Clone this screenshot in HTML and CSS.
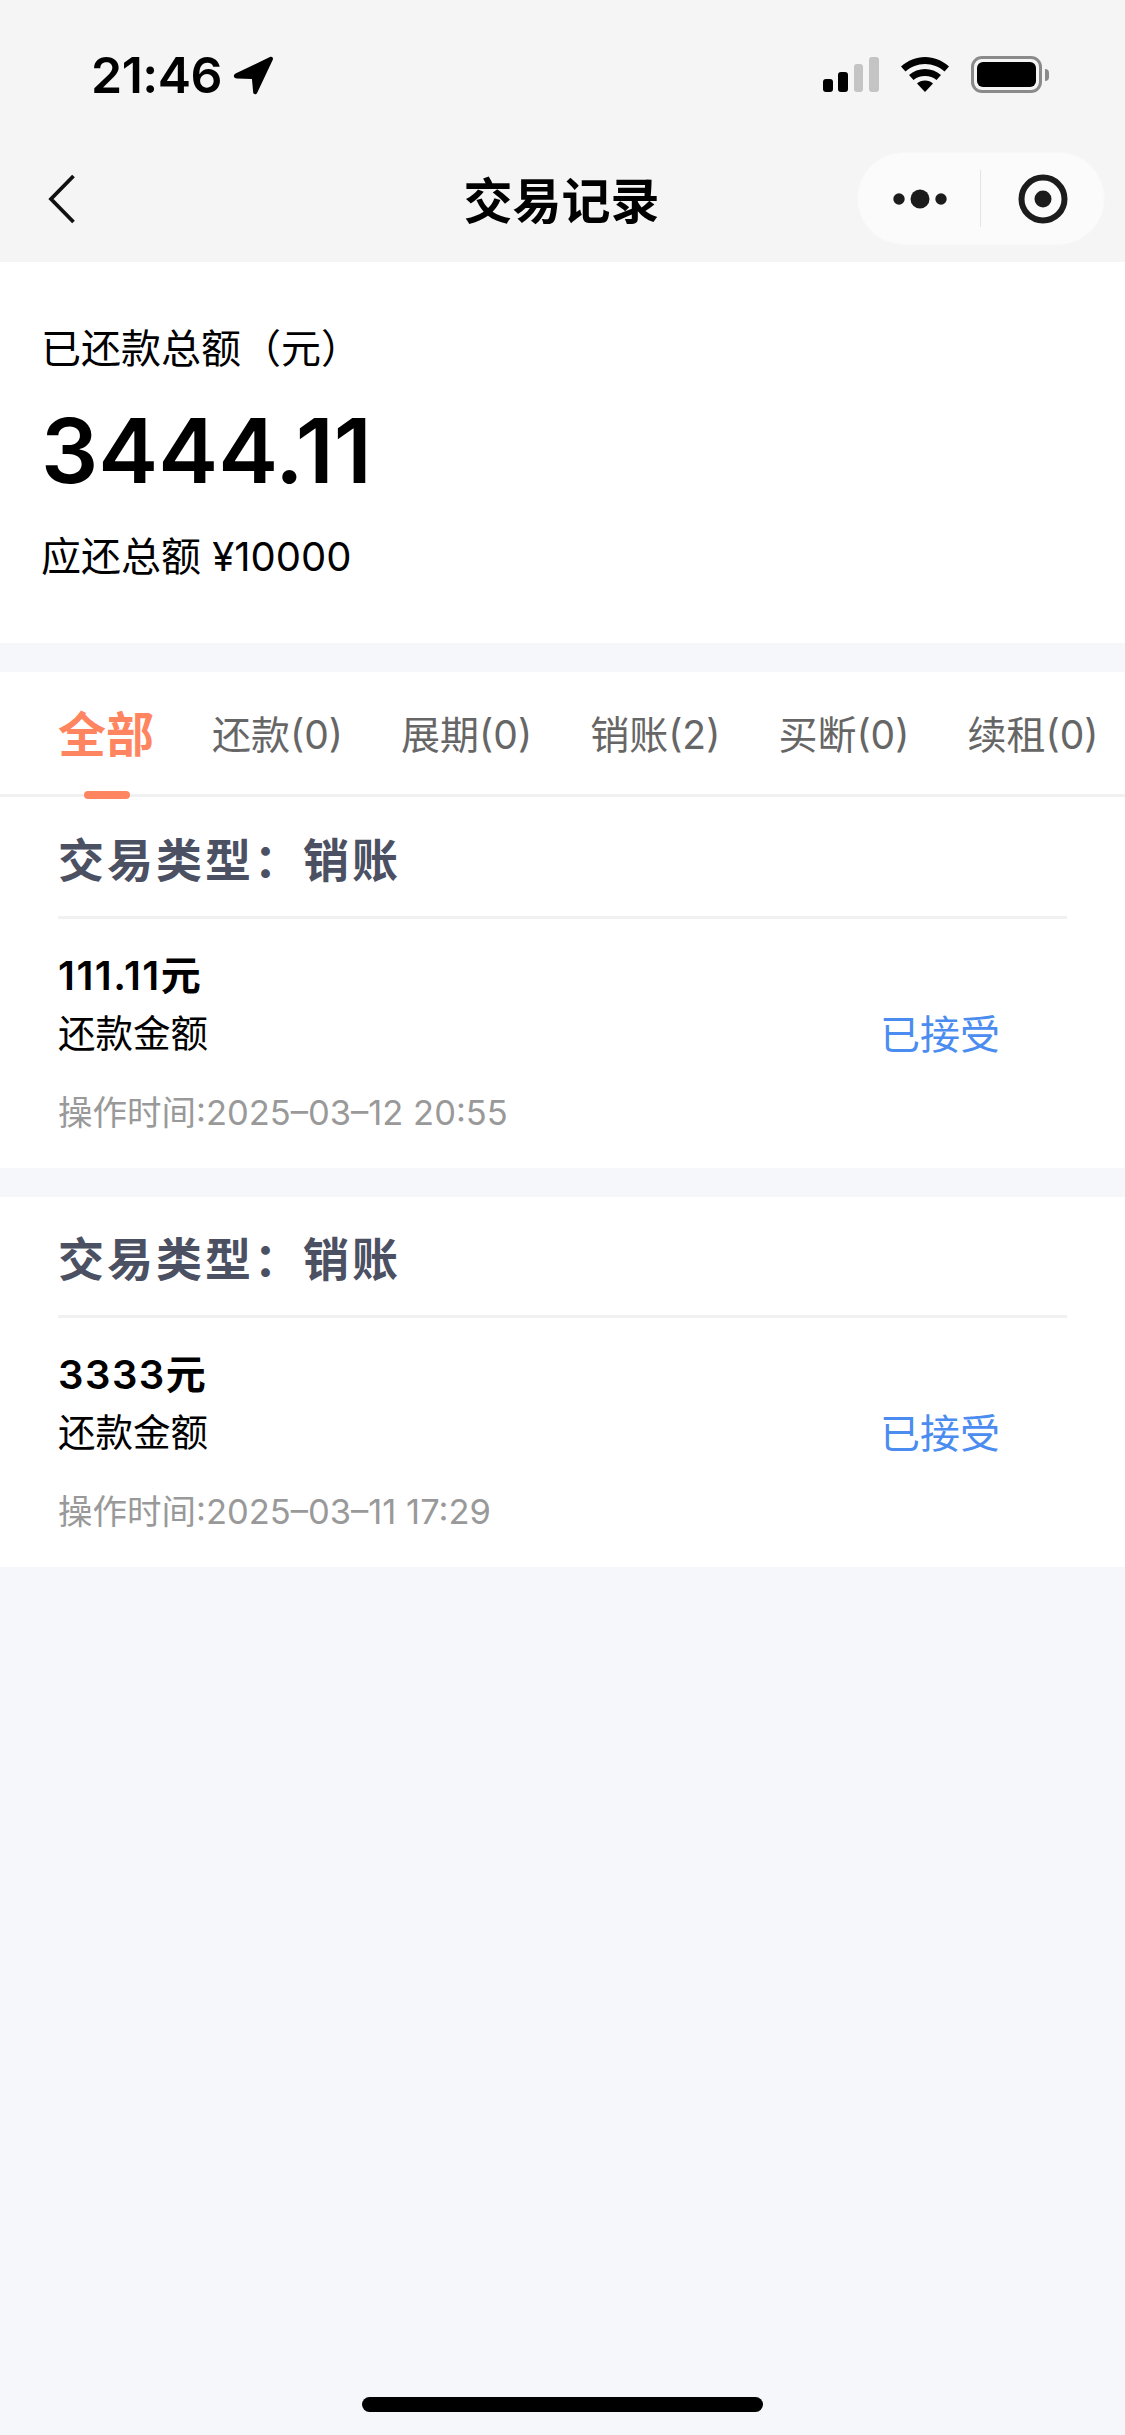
FILE: index.html
```html
<!DOCTYPE html>
<html lang="zh-CN">
<head>
<meta charset="utf-8">
<title>交易记录</title>
<link rel="stylesheet" href="styles.css">
</head>
<body>
<div class="page">
  <header class="top">
    <div class="status">
      <div class="status-left">
        <span class="clock">21:46</span>
        <svg class="loc" viewBox="0 0 40 38" width="41" height="39"><path d="M2.500 17 36 1c2-.9 3.600.7 2.800 2.700L23.500 36c-.8 1.800-3.600 1.500-3.800-.5L18.500 22.500 4 22c-3.500-.2-4.200-3.500-1.500-5z" fill="#000"/></svg>
      </div>
      <div class="status-right">
        <svg class="signal" viewBox="0 0 56 35" width="56" height="35">
          <rect x="0" y="22" width="10" height="13" rx="3" fill="#000"/>
          <rect x="15" y="15" width="10" height="20" rx="3" fill="#000"/>
          <rect x="31" y="7" width="9" height="28" rx="3" fill="#c4c4c4"/>
          <rect x="46" y="0" width="10" height="35" rx="3" fill="#c4c4c4"/>
        </svg>
        <svg class="wifi" viewBox="0 0 48 35" width="48" height="35">
          <path d="M24 0C15 0 7 3.500 0 9.500l4.500 5C10 9.800 16.500 7 24 7s14 2.800 19.500 7.500l4.500-5C41 3.500 33 0 24 0z" fill="#000"/>
          <path d="M24 12c-6 0-11.500 2.200-16 6l4.500 5c3-2.500 7-4 11.500-4s8.500 1.500 11.500 4l4.500-5c-4.500-3.800-10-6-16-6z" fill="#000"/>
          <path d="M24 23.500c-3.200 0-6 1.100-8 3L24 35l8-8.500c-2-1.900-4.800-3-8-3z" fill="#000"/>
        </svg>
        <div class="battery"><span class="battery-fill"></span></div>
        <span class="battery-nub"></span>
      </div>
    </div>
    <nav class="nav">
      <svg class="back" viewBox="0 0 28 50" width="28" height="50"><path d="M25.500 2 3 25l22.500 23" fill="none" stroke="#111" stroke-width="3.800"/></svg>
      <h1 class="nav-title">交易记录</h1>
      <div class="capsule">
        <svg class="dots" viewBox="0 0 54 20" width="54" height="20"><circle cx="6" cy="10" r="5.700" fill="#1c1c1c"/><circle cx="27" cy="10" r="9.500" fill="#1c1c1c"/><circle cx="48" cy="10" r="5.700" fill="#1c1c1c"/></svg>
        <span class="capsule-line"></span>
        <svg class="target" viewBox="0 0 50 50" width="50" height="50"><circle cx="25" cy="25" r="21.500" fill="none" stroke="#1c1c1c" stroke-width="6"/><circle cx="25" cy="25" r="8.500" fill="#1c1c1c"/></svg>
      </div>
    </nav>
  </header>

  <section class="summary">
    <p class="summary-label">已还款总额（元）</p>
    <p class="summary-amount">3444.11</p>
    <p class="summary-due">应还总额 ¥10000</p>
  </section>

  <section class="records">
    <div class="tabs">
      <span class="tab tab-active">全部</span>
      <span class="tab">还款(0)</span>
      <span class="tab">展期(0)</span>
      <span class="tab">销账(2)</span>
      <span class="tab">买断(0)</span>
      <span class="tab">续租(0)</span>
    </div>

    <article class="record record-first">
      <h2 class="record-type">交易类型：销账</h2>
      <div class="record-body">
        <div class="record-info">
          <p class="record-amount">111.11元</p>
          <p class="record-label">还款金额</p>
          <p class="record-time">操作时间:2025–03–12 20:55</p>
        </div>
        <span class="record-state">已接受</span>
      </div>
    </article>

    <article class="record">
      <h2 class="record-type">交易类型：销账</h2>
      <div class="record-body">
        <div class="record-info">
          <p class="record-amount">3333元</p>
          <p class="record-label">还款金额</p>
          <p class="record-time">操作时间:2025–03–11 17:29</p>
        </div>
        <span class="record-state">已接受</span>
      </div>
    </article>
  </section>

  <div class="home-bar"></div>
</div>
</body>
</html>
```
FILE: styles.css
```css
* { box-sizing: border-box; margin: 0; padding: 0; }
html, body { width: 1125px; height: 2435px; overflow: hidden; }
body {
  background: #f6f7fb;
  color: #000;
  font-family: Inter, "Noto Sans CJK SC", "Noto Sans", sans-serif;
}
.page { position: relative; width: 1125px; height: 2435px; }

.top { height: 262px; background: #f5f5f5; display: flex; flex-direction: column; }
.status { height: 153px; padding: 56px 76px 0 91px; display: flex; justify-content: space-between; align-items: flex-start; }
.status-left { display: flex; align-items: center; gap: 11px; height: 38px; }
.clock { font-size: 50px; font-weight: 600; line-height: 38px; letter-spacing: -0.5px; }
.status-right { display: flex; align-items: center; height: 37px; }
.signal { margin-right: 22px; }
.wifi { margin-right: 22px; }
.battery { width: 71px; height: 37px; border: 3px solid #8a8a8a; border-radius: 11px; padding: 3px; }
.battery-fill { display: block; width: 100%; height: 100%; background: #000; border-radius: 6px; }
.battery-nub { width: 4px; height: 12px; margin-left: 3px; background: #8a8a8a; border-radius: 0 4px 4px 0; }

.nav { height: 91px; padding: 0 20px 0 48px; display: flex; align-items: center; justify-content: space-between; position: relative; }
.nav-title { position: absolute; left: 0; right: 0; top: 0; bottom: 0; display: flex; align-items: center; justify-content: center; font-size: 49px; font-weight: 600; padding: 0 2px 3px 0; }
.capsule { position: relative; flex: none; width: 248px; height: 93px; border-radius: 47px; background: #fbfbfb; border: 1px solid #f8f8f8; display: flex; align-items: center; padding-left: 35px; }
.dots { flex: none; }
.capsule-line { width: 1px; height: 57px; background: #e4e4e4; margin-left: 33px; margin-right: 36px; }
.target { margin-left: 1px; }

.summary { height: 381px; background: #fff; padding: 62px 41px 0; }
.summary-label { font-size: 40px; line-height: 50px; }
.summary-amount { font-size: 90px; line-height: 110px; font-weight: 600; margin-top: 22px; letter-spacing: 0; }
.summary-due { font-size: 40px; line-height: 50px; margin-top: 26px; }

.records { margin-top: 29px; }
.tabs { height: 125px; background: #fff; border-bottom: 3px solid #f1f1f1; display: flex; gap: 58px; padding-left: 58px; position: relative; }
.tab { font-size: 39px; color: #666; line-height: 125px; height: 122px; white-space: nowrap; position: relative; }
.tab-active { font-size: 48px; font-weight: 600; color: #ff8560; }
.tab-active::after { content: ""; position: absolute; left: 50%; margin-left: -22px; bottom: -5px; width: 46px; height: 8px; border-radius: 4px; background: #ff8560; }

.record { background: #fff; height: 370px; margin-top: 29px; padding: 0 58px; }
.record-first { margin-top: 0; height: 371px; padding-top: 1px; }
.record-type { height: 121px; padding-top: 7px; border-bottom: 3px solid #f1f1f1; font-size: 46px; font-weight: 600; line-height: 110px; letter-spacing: 3px; color: #4b5163; }
.record-body { display: flex; justify-content: space-between; align-items: center; padding: 32px 67px 0 0; }
.record-amount { font-size: 40px; font-weight: 600; line-height: 50px; letter-spacing: 1.5px; }
.record-label { font-size: 37.5px; line-height: 50px; margin-top: 8px; }
.record-time { font-size: 34.5px; line-height: 50px; color: #999; margin-top: 29px; }
.record-state { font-size: 40px; color: #4a8cf0; margin-top: -26px; }

.home-bar { position: absolute; left: 362px; top: 2397px; width: 401px; height: 15px; border-radius: 8px; background: #000; }
```
